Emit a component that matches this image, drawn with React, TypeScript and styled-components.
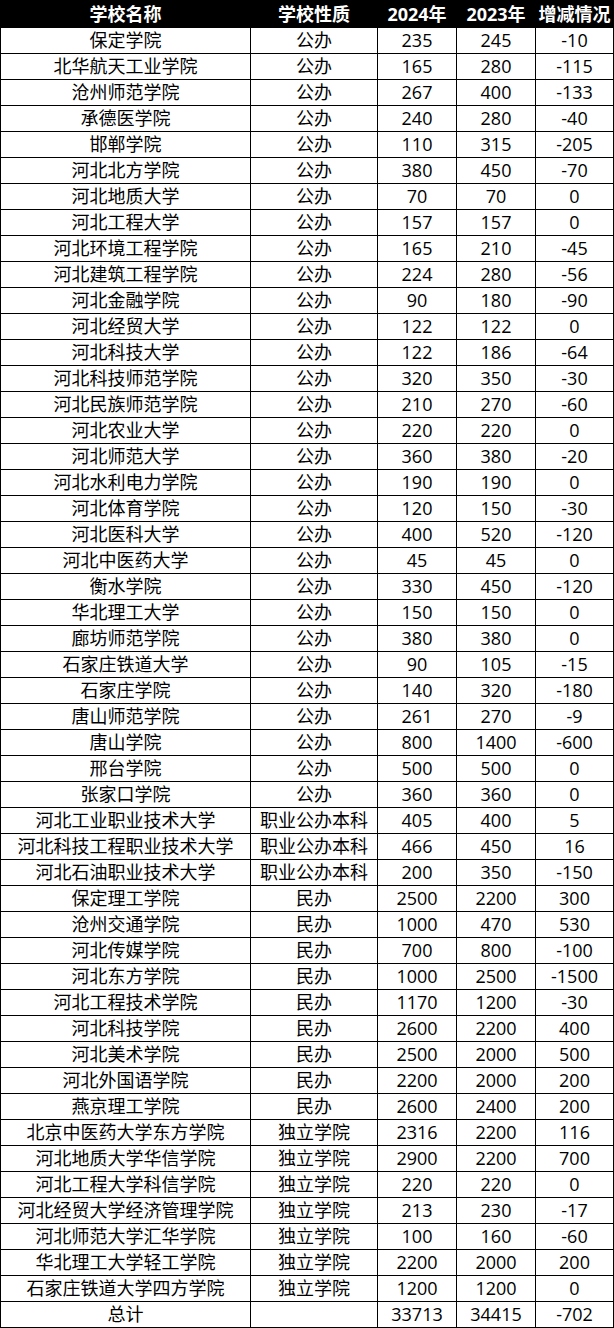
import React from "react";
import styled, { createGlobalStyle } from "styled-components";

const GlobalStyle = createGlobalStyle`
  html, body { margin: 0; padding: 0; background: #ffffff; }
  body { font-family: "Open Sans", "Noto Sans CJK SC", sans-serif; }
`;

const Grid = styled.div`
  display: grid;
  grid-template-columns: 249px 126px 78px 78px 77px;
  grid-auto-rows: 25px;
  grid-template-rows: 26px;
  gap: 1px;
  padding: 1px;
  width: 614px;
  box-sizing: border-box;
  background: #000000;
  font-family: "Open Sans", "Noto Sans CJK SC", sans-serif;
`;

const HeadCell = styled.div`
  background: #000000;
  color: #ffffff;
  font-weight: 700;
  font-size: 18px;
  line-height: 26px;
  text-align: center;
  white-space: nowrap;
`;

const Cell = styled.div`
  background: #ffffff;
  color: #000000;
  font-size: 18px;
  line-height: 25px;
  text-align: center;
  white-space: nowrap;
  overflow: hidden;
`;

type Row = [string, string, string, string, string];

const rows: Row[] = [
  ["保定学院", "公办", "235", "245", "-10"],
  ["北华航天工业学院", "公办", "165", "280", "-115"],
  ["沧州师范学院", "公办", "267", "400", "-133"],
  ["承德医学院", "公办", "240", "280", "-40"],
  ["邯郸学院", "公办", "110", "315", "-205"],
  ["河北北方学院", "公办", "380", "450", "-70"],
  ["河北地质大学", "公办", "70", "70", "0"],
  ["河北工程大学", "公办", "157", "157", "0"],
  ["河北环境工程学院", "公办", "165", "210", "-45"],
  ["河北建筑工程学院", "公办", "224", "280", "-56"],
  ["河北金融学院", "公办", "90", "180", "-90"],
  ["河北经贸大学", "公办", "122", "122", "0"],
  ["河北科技大学", "公办", "122", "186", "-64"],
  ["河北科技师范学院", "公办", "320", "350", "-30"],
  ["河北民族师范学院", "公办", "210", "270", "-60"],
  ["河北农业大学", "公办", "220", "220", "0"],
  ["河北师范大学", "公办", "360", "380", "-20"],
  ["河北水利电力学院", "公办", "190", "190", "0"],
  ["河北体育学院", "公办", "120", "150", "-30"],
  ["河北医科大学", "公办", "400", "520", "-120"],
  ["河北中医药大学", "公办", "45", "45", "0"],
  ["衡水学院", "公办", "330", "450", "-120"],
  ["华北理工大学", "公办", "150", "150", "0"],
  ["廊坊师范学院", "公办", "380", "380", "0"],
  ["石家庄铁道大学", "公办", "90", "105", "-15"],
  ["石家庄学院", "公办", "140", "320", "-180"],
  ["唐山师范学院", "公办", "261", "270", "-9"],
  ["唐山学院", "公办", "800", "1400", "-600"],
  ["邢台学院", "公办", "500", "500", "0"],
  ["张家口学院", "公办", "360", "360", "0"],
  ["河北工业职业技术大学", "职业公办本科", "405", "400", "5"],
  ["河北科技工程职业技术大学", "职业公办本科", "466", "450", "16"],
  ["河北石油职业技术大学", "职业公办本科", "200", "350", "-150"],
  ["保定理工学院", "民办", "2500", "2200", "300"],
  ["沧州交通学院", "民办", "1000", "470", "530"],
  ["河北传媒学院", "民办", "700", "800", "-100"],
  ["河北东方学院", "民办", "1000", "2500", "-1500"],
  ["河北工程技术学院", "民办", "1170", "1200", "-30"],
  ["河北科技学院", "民办", "2600", "2200", "400"],
  ["河北美术学院", "民办", "2500", "2000", "500"],
  ["河北外国语学院", "民办", "2200", "2000", "200"],
  ["燕京理工学院", "民办", "2600", "2400", "200"],
  ["北京中医药大学东方学院", "独立学院", "2316", "2200", "116"],
  ["河北地质大学华信学院", "独立学院", "2900", "2200", "700"],
  ["河北工程大学科信学院", "独立学院", "220", "220", "0"],
  ["河北经贸大学经济管理学院", "独立学院", "213", "230", "-17"],
  ["河北师范大学汇华学院", "独立学院", "100", "160", "-60"],
  ["华北理工大学轻工学院", "独立学院", "2200", "2000", "200"],
  ["石家庄铁道大学四方学院", "独立学院", "1200", "1200", "0"],
  ["总计", "", "33713", "34415", "-702"],
];

const headers = ["学校名称", "学校性质", "2024年", "2023年", "增减情况"];

export default function App() {
  return (
    <>
      <GlobalStyle />
      <Grid>
        {headers.map((h) => (
          <HeadCell key={h}>{h}</HeadCell>
        ))}
        {rows.map((r, i) =>
          r.map((c, j) => <Cell key={`${i}-${j}`}>{c}</Cell>)
        )}
      </Grid>
    </>
  );
}
